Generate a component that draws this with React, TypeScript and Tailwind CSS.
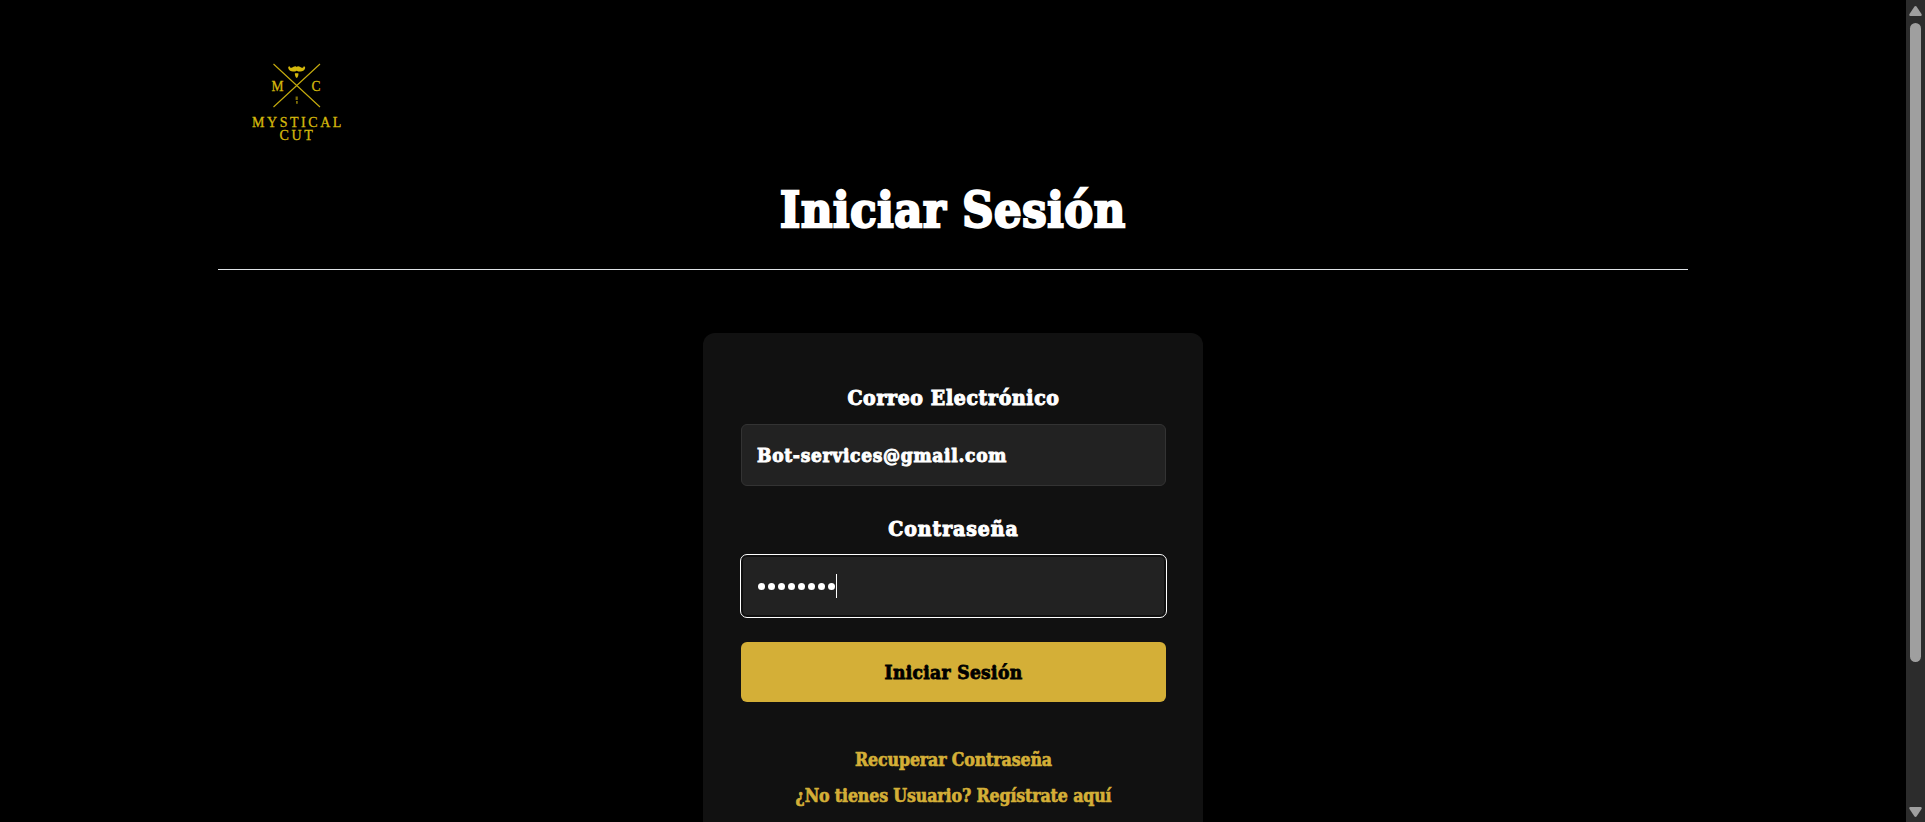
import type { ReactNode } from 'react';

function Logo() {
  return (
    <svg viewBox="240 50 115 100" className="h-[100px] w-[115px]" fill="#d4b80c" role="img" aria-label="Mystical Cut">
      <path d="M273.5 64 320 107M320 64 273.5 107" stroke="#c4aa0e" strokeWidth="1.15" fill="none" />
      <path d="M289.8 66.300c-1.300 0-1.800.9-1.500 2 .6 2.300 2.600 3.300 4.700 3.300 1.500 0 2.800-.3 3.700-.9.9.6 2.200.9 3.700.9 2.100 0 4.100-1 4.700-3.300.3-1.100-.2-2-1.500-2 .2 1.200-.8 1.700-1.900 1.400-1.500-.4-2.200-1.400-3.600-1.400-.6 0-1.100.2-1.400.6-.3-.4-.8-.6-1.400-.6-1.400 0-2.100 1-3.600 1.400-1.100.3-2.100-.2-1.900-1.400z" />
      <path d="M294.900 73.200h3.500c.2 1.900-.4 3.900-1.700 4.900-1.300-1-2-3-1.800-4.900z" />
      <path d="M295.600 96.500h2.200v3.500h-2.200zM296 101h1.800v2.700H296z" opacity=".6" />
      <g fontFamily="'Liberation Serif', serif" fontSize="15.5" fontWeight="400" stroke="#d4b80c" strokeWidth=".3">
        <text x="271.500" y="91" textLength="12" lengthAdjust="spacingAndGlyphs">M</text>
        <text x="311.500" y="91" textLength="9" lengthAdjust="spacingAndGlyphs">C</text>
        <text x="252" y="126.500" fontSize="14" letterSpacing="2.550">MYSTICAL</text>
        <text x="279.500" y="139.700" fontSize="14" letterSpacing="2.600">CUT</text>
      </g>
    </svg>
  );
}

function Label({ children, id, spacing }: { children: ReactNode; id: string; spacing: string }) {
  return (
    <label htmlFor={id} className={`block text-center text-[21px] leading-7 [-webkit-text-stroke:1px_white] ${spacing}`}>
      {children}
    </label>
  );
}

function Scrollbar() {
  return (
    <div className="flex h-full w-[19px] shrink-0 flex-col items-center justify-between bg-[#2c2c2c] pt-[6px] pb-[5px]">
      <svg className="h-[10px] w-[13px]" viewBox="0 0 13 10" fill="#9f9f9f">
        <path d="M5.300.7q1.200-1.200 2.400 0l4.800 7.300q.7 1.700-.8 2H1.300q-1.500-.3-.8-2z" />
      </svg>
      <div className="mt-[7px] h-[639px] w-[11px] rounded-full bg-[#9f9f9f]" />
      <svg className="mt-auto h-[10px] w-[13px]" viewBox="0 0 13 10" fill="#9f9f9f">
        <path d="M5.300 9.300q1.200 1.200 2.400 0l4.800-7.300q.7-1.700-.8-2H1.300q-1.500.3-.8 2z" />
      </svg>
    </div>
  );
}

export default function App() {
  return (
    <div className="flex h-[822px] overflow-hidden bg-black font-['DejaVu_Serif_Condensed','DejaVu_Serif',serif] font-bold text-white">
      <div className="flex min-w-0 flex-1 flex-col items-center overflow-hidden">
        <header className="flex w-[1470px] flex-col border-b border-[#dee2e6] pt-[50px] pb-[29px]">
          <div className="pl-[22px]">
            <Logo />
          </div>
          <h1 className="mt-[30px] text-center text-5xl leading-[60px] tracking-[0.7px] [-webkit-text-stroke:2.300px_white]">
            Iniciar Sesión
          </h1>
        </header>
        <form className="mt-[63px] h-[560px] w-[500px] shrink-0 rounded-xl bg-[#111] pt-[51px] pr-[37px] pl-[38px]">
          <Label id="email" spacing="tracking-[0.67px]">Correo Electrónico</Label>
          <div id="email" className="mt-3 flex h-[62px] items-center rounded-md border border-[#333] bg-[#222] px-[15px] text-[19px] tracking-[0.7px] [-webkit-text-stroke:0.9px_white]">
            Bot-services@gmail.com
          </div>
          <div className="mt-[29px]">
            <Label id="password" spacing="tracking-[0.95px]">Contraseña</Label>
          </div>
          <div id="password" className="mt-3 flex h-[62px] items-center rounded-md border-2 border-[#101010] bg-[#222] pl-[15px] outline outline-white">
            <div className="flex gap-[3px]">
              {Array.from({ length: 8 }, (_, i) => (
                <span key={i} className="size-[7px] rounded-full bg-white" />
              ))}
            </div>
            <span className="ml-px h-6 w-px bg-white" />
          </div>
          <button type="button" className="mt-[25px] block h-[60px] w-full rounded-md bg-[#d4af37] text-center text-[19px] tracking-[0.35px] text-black [-webkit-text-stroke:0.800px_black]">
            Iniciar Sesión
          </button>
          <nav className="mt-10 flex flex-col items-center text-[17.600px] leading-9 tracking-[-0.120px] text-[#d4af37] [-webkit-text-stroke:0.600px_#d4af37]">
            <a>Recuperar Contraseña</a>
            <a>¿No tienes Usuario? Regístrate aquí</a>
          </nav>
        </form>
      </div>
      <Scrollbar />
    </div>
  );
}
